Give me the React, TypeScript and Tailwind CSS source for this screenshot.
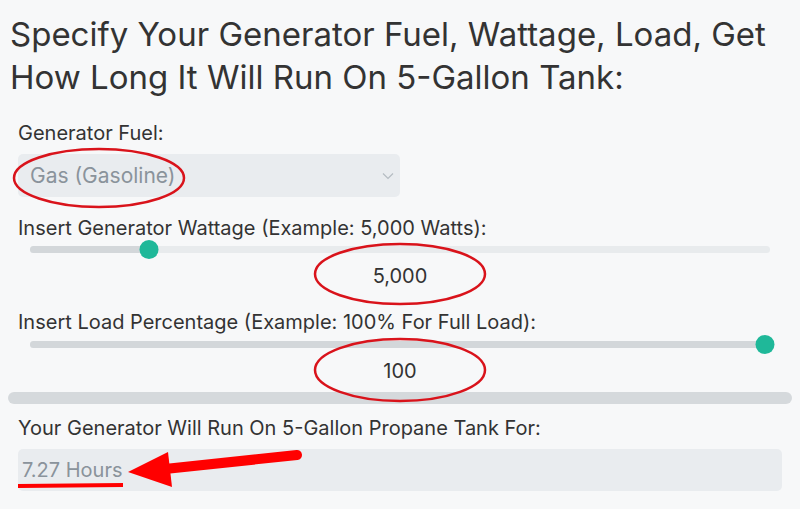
import React, { useState } from 'react';

function Slider({ value, min, max, fill }: { value: number; min: number; max: number; fill: boolean }) {
  const pct = (value - min) / (max - min);
  // thumb travels inside the track, like a native range input
  const left = `calc(${pct} * (100% - 10px) + 5px)`;
  return (
    <div className="relative mx-[12px] h-[18px]">
      <div className="absolute inset-x-0 top-[6px] h-[7px] rounded-full bg-[#e8ebed]" />
      {fill && (
        <div className="absolute left-0 top-[6px] h-[7px] rounded-full bg-[#d3d7da]" style={{ width: left }} />
      )}
      <div
        className="absolute top-0 h-[19px] w-[19px] -translate-x-1/2 rounded-full bg-[#1fb899]"
        style={{ left }}
      />
    </div>
  );
}

export default function App() {
  const [fuel, setFuel] = useState('gas');
  const [watts] = useState(5000);
  const [load] = useState(100);

  return (
    <div
      className="relative flex h-[509px] w-[800px] flex-col overflow-hidden bg-[#f7f8f9] text-[#333]"
      style={{ fontFamily: 'Inter, "Noto Sans", sans-serif' }}
    >
      <h1 className="px-[10px] pt-[13px] text-[33px] leading-[43px] text-[#333]">
        Specify Your Generator Fuel, Wattage, Load, Get How Long It Will Run On 5-Gallon Tank:
      </h1>

      <div className="flex flex-col px-[18px]">
        <label className="mt-[22px] text-[20px] leading-[24px]">Generator Fuel:</label>
        <div className="relative mt-[9px] w-[382px]">
          <select
            value={fuel}
            onChange={(e) => setFuel(e.target.value)}
            disabled
            className="h-[43px] w-full appearance-none rounded-[5px] bg-[#e9ecef] px-[12px] text-[21px] text-[#8a939b]"
          >
            <option value="gas">Gas (Gasoline)</option>
            <option value="propane">Propane</option>
          </select>
          <svg className="pointer-events-none absolute right-[6px] top-[18px] h-[8px] w-[12px]" viewBox="0 0 12 8" fill="none">
            <path d="M1 1.5l5 5 5-5" stroke="#b5bcc2" strokeWidth="1.2" />
          </svg>
        </div>

        <label className="mt-[19px] text-[20px] leading-[24px]">
          Insert Generator Wattage (Example: 5,000 Watts):
        </label>
        <Slider value={watts} min={0} max={32000} fill />
        <div className="mt-[3px] text-center text-[20px] leading-[30px]">{watts.toLocaleString('en-US')}</div>

        <label className="mt-[19px] text-[20px] leading-[24px]">
          Insert Load Percentage (Example: 100% For Full Load):
        </label>
        <div className="mt-[1px]">
          <Slider value={load} min={0} max={100} fill />
        </div>
        <div className="mt-[3px] text-center text-[20px] leading-[30px]">{load}</div>
      </div>

      <div className="mx-[8px] mt-[6px] h-[12px] rounded-full bg-[#d5d9dc]" />

      <div className="flex flex-col px-[18px]">
        <label className="mt-[12px] text-[20px] leading-[24px]">
          Your Generator Will Run On 5-Gallon Propane Tank For:
        </label>
        <div className="mt-[9px] flex h-[42px] items-center rounded-[5px] bg-[#e9ecef] px-[4px] text-[20px] text-[#8a939b]">
          7.27 Hours
        </div>
      </div>

      {/* red annotations drawn over the form */}
      <svg className="pointer-events-none absolute left-0 top-0" width="800" height="509" viewBox="0 0 800 509" fill="none">
        <ellipse cx="99" cy="178" rx="85" ry="29" stroke="#d9131b" strokeWidth="2.5" />
        <ellipse cx="400" cy="274" rx="85" ry="30" stroke="#d9131b" strokeWidth="2.5" />
        <ellipse cx="400" cy="370" rx="85" ry="31" stroke="#d9131b" strokeWidth="2.5" />
        <path d="M18 486L123 485" stroke="#f00" strokeWidth="4" />
        <path d="M297 455L165 469" stroke="#f00" strokeWidth="10" strokeLinecap="round" />
        <path d="M128 472L168 452L172 487Z" fill="#f00" />
      </svg>
    </div>
  );
}
